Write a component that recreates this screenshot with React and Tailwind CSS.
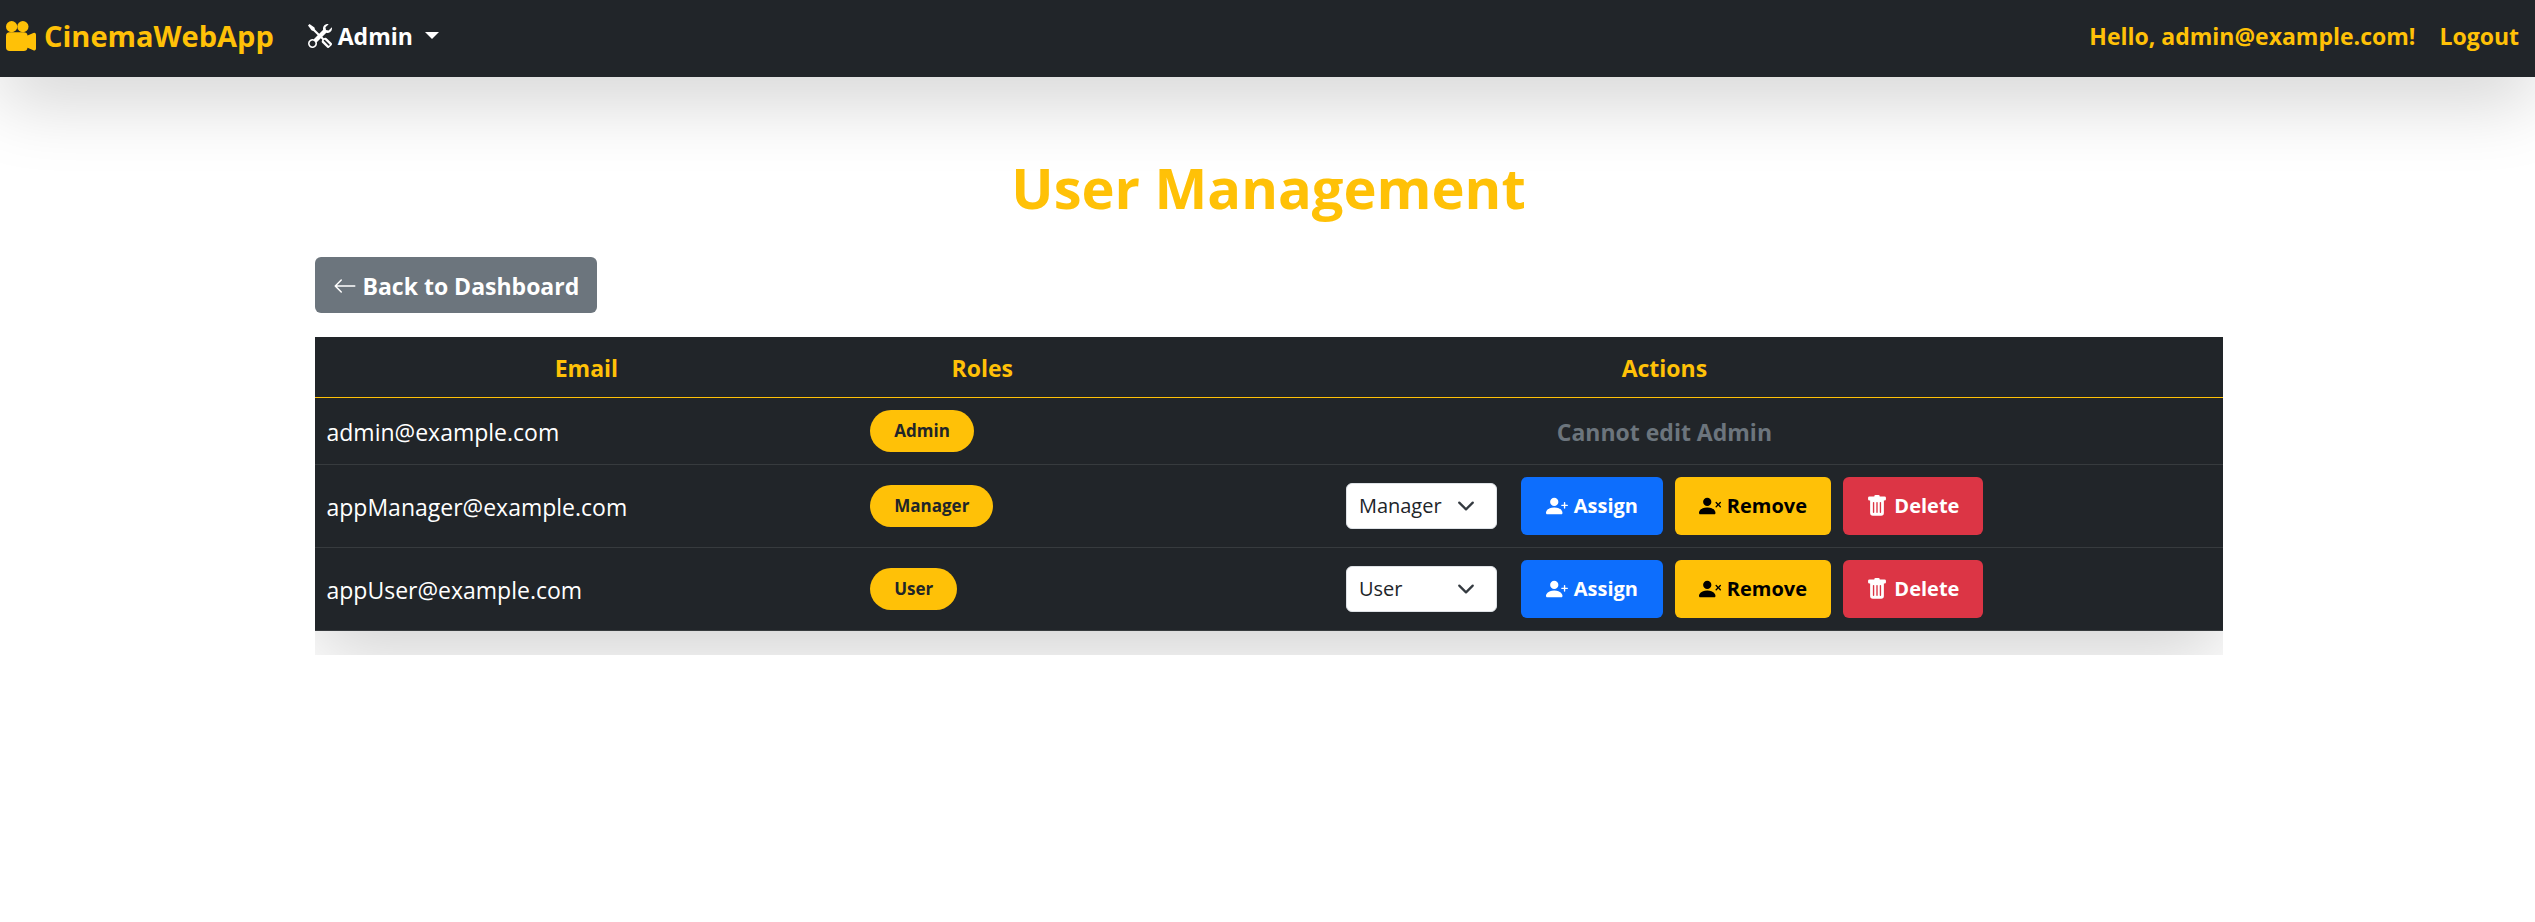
import {
  BsArrowLeft,
  BsCameraReelsFill,
  BsPersonPlusFill,
  BsPersonXFill,
  BsTools,
  BsTrashFill,
} from "react-icons/bs";

const users = [
  { email: "admin@example.com", role: "Admin", locked: true },
  { email: "appManager@example.com", role: "Manager" },
  { email: "appUser@example.com", role: "User" },
];

function Navbar() {
  return (
    <header className="relative bg-[#212529] shadow-[0_24px_72px_rgba(0,0,0,0.175)]">
      <nav className="flex h-[77px] items-center justify-between pb-[6px] pl-[6px] pr-4 font-bold text-[#ffc107]">
        <div className="flex items-center gap-[34px]">
          <a href="#home" className="flex items-center gap-2 text-[29px] leading-9">
            <BsCameraReelsFill className="size-[30px]" />
            CinemaWebApp
          </a>
          <button type="button" className="flex items-center gap-[6px] text-[23px] leading-9 text-white">
            <BsTools className="size-6" />
            Admin
            <span className="ml-[6px] border-x-[7px] border-t-[7px] border-x-transparent border-t-white" />
          </button>
        </div>
        <div className="flex items-center gap-6 text-[23px] leading-9">
          <span>Hello, admin@example.com!</span>
          <a href="#logout">Logout</a>
        </div>
      </nav>
    </header>
  );
}

function ActionButton({ icon: Icon, label, className }) {
  return (
    <button
      type="button"
      className={`flex h-[58px] items-center justify-center gap-[6px] rounded-md text-[20px] leading-8 font-bold ${className}`}
    >
      <Icon className="size-[22px]" />
      {label}
    </button>
  );
}

function RoleSelect({ user }) {
  return (
    <div className="mr-3 grid items-center">
      <select
        aria-label={`Role for ${user.email}`}
        defaultValue={user.role}
        className="col-start-1 row-start-1 h-[46px] w-[151px] appearance-none rounded-md border border-[#dee2e6] bg-white pl-3 text-[20px] text-[#212529]"
      >
        <option>Manager</option>
        <option>User</option>
      </select>
      <svg
        viewBox="0 0 16 16"
        className="pointer-events-none col-start-1 row-start-1 mr-[22px] size-[18px] justify-self-end"
        fill="none"
        stroke="#343a40"
        strokeWidth="2"
        strokeLinecap="round"
        strokeLinejoin="round"
      >
        <path d="m2 5 6 6 6-6" />
      </svg>
    </div>
  );
}

function UserRow({ user }) {
  return (
    <tr className="border-b border-[#373b3e]">
      <td className="px-3 pt-[2px] text-[23px]">{user.email}</td>
      <td className="px-3">
        <span className="inline-flex h-[42px] items-center rounded-full bg-[#ffc107] px-6 align-middle text-[17px] font-bold text-[#212529]">
          {user.role}
        </span>
      </td>
      {user.locked ? (
        <td className="h-[67px] pt-[2px] text-center text-[23px] font-bold text-[#6c757d]">Cannot edit Admin</td>
      ) : (
        <td className="py-3">
          <div className="flex items-center justify-center gap-3">
            <RoleSelect user={user} />
            <ActionButton icon={BsPersonPlusFill} label="Assign" className="w-[142px] bg-[#0d6efd] text-white" />
            <ActionButton icon={BsPersonXFill} label="Remove" className="w-[156px] bg-[#ffc107] text-black" />
            <ActionButton icon={BsTrashFill} label="Delete" className="w-[140px] bg-[#dc3545] text-white" />
          </div>
        </td>
      )}
    </tr>
  );
}

export default function App() {
  return (
    <div className="min-h-screen bg-white font-['Open_Sans','Noto_Sans',sans-serif]">
      <Navbar />
      <main className="mx-auto max-w-[1982px] pl-[38px] pr-9 pt-[68px]">
        <h1 className="mb-7 text-center text-[56px] leading-[84px] font-bold text-[#ffc107]">User Management</h1>
        <a
          href="#dashboard"
          className="inline-flex h-14 items-center gap-[6px] rounded-md bg-[#6c757d] px-[18px] pt-[2px] align-top text-[23px] font-bold text-white"
        >
          <BsArrowLeft className="size-6" />
          Back to Dashboard
        </a>
        <div className="mt-6 overflow-hidden pb-6">
          <table className="w-full table-fixed border-collapse bg-[#212529] text-left leading-9 text-white shadow-[0_24px_72px_rgba(0,0,0,0.175)]">
            <colgroup>
              <col className="w-[28.5%]" />
              <col className="w-[13%]" />
              <col />
            </colgroup>
            <thead>
              <tr className="h-[60px] border-b border-[#ffc107] text-[23px] text-[#ffc107]">
                <th className="pt-[2px] text-center font-bold">Email</th>
                <th className="pt-[2px] text-center font-bold">Roles</th>
                <th className="pt-[2px] text-center font-bold">Actions</th>
              </tr>
            </thead>
            <tbody>
              {users.map((user) => (
                <UserRow key={user.email} user={user} />
              ))}
            </tbody>
          </table>
        </div>
      </main>
    </div>
  );
}
